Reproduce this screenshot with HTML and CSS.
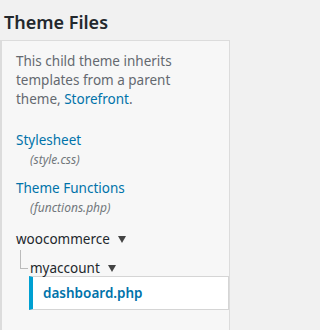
FILE: index.html
```html
<!DOCTYPE html>
<html>
<head>
<meta charset="utf-8">
<link rel="stylesheet" href="styles.css">
</head>
<body>
<h2 class="title">Theme Files</h2>
<div class="panel">
  <p class="note">This child theme inherits<br>templates from a parent<br>theme, <a class="link" href="#">Storefront</a>.</p>
  <ul class="files">
    <li class="file">
      <a class="link file-name" href="#">Stylesheet</a>
      <span class="file-path">(style.css)</span>
    </li>
    <li class="file">
      <a class="link file-name" href="#">Theme Functions</a>
      <span class="file-path">(functions.php)</span>
    </li>
  </ul>
  <div class="tree">
    <div class="folder">woocommerce <svg class="caret" width="8" height="7" viewBox="0 0 8 7"><polygon points="0,0 8,0 4,7" fill="#444"/></svg></div>
    <div class="sub">
      <div class="folder child">myaccount <svg class="caret" width="8" height="7" viewBox="0 0 8 7"><polygon points="0,0 8,0 4,7" fill="#444"/></svg></div>
      <div class="current"><a class="current-link" href="#">dashboard.php</a></div>
    </div>
  </div>
</div>
</body>
</html>
```
FILE: styles.css
```css
html, body {
  margin: 0;
  padding: 0;
  background: #f1f1f1;
  font-family: "Noto Sans", "Open Sans", sans-serif;
  height: 100%;
  overflow: hidden;
}
.title {
  margin: 0;
  padding: 10px 0 0 4px;
  height: 30px;
  font-size: 18px;
  font-weight: 600;
  line-height: 24px;
  color: #23282d;
}
.panel {
  width: 227px;
  min-height: 280px;
  background: #f7f7f7;
  border: 1px solid #dcdcdc;
  border-left: 2px solid #dcdcdc;
  border-bottom: 0;
  padding-top: 11px;
}
.note {
  margin: 0 20px 20.5px 14px;
  font-size: 13.5px;
  line-height: 19px;
  color: #646970;
}
.link {
  color: #0073aa;
  text-decoration: none;
}
.files {
  list-style: none;
  margin: 0;
  padding: 0;
}
.file {
  display: flex;
  flex-direction: column;
  margin: 0 0 10px 14px;
}
.file-name {
  font-size: 13.5px;
  line-height: 20px;
}
.file-path {
  margin: 2px 0 0 14px;
  font-size: 12px;
  line-height: 16px;
  font-style: italic;
  color: #72777c;
}
.tree {
  margin-top: 13.5px;
}
.folder {
  display: flex;
  align-items: center;
  gap: 8px;
  font-size: 13.5px;
  line-height: 20px;
  color: #23282d;
  margin-left: 14px;
}
.sub {
  margin-top: 9px;
  position: relative;
}
.folder.child {
  margin-left: 28px;
  position: relative;
}
.folder.child::before {
  content: "";
  position: absolute;
  left: -10px;
  top: -8px;
  width: 7px;
  height: 18px;
  border-left: 1px solid #bbb;
  border-bottom: 1px solid #bbb;
}
.current {
  margin: -2px 0 0 27px;
  background: #fff;
  border: 1px solid #d5d5d5;
  border-left: 4px solid #00a0d2;
  height: 32px;
  display: flex;
  align-items: center;
  padding-left: 10px;
}
.current-link {
  color: #0073aa;
  font-weight: 600;
  font-size: 13.5px;
  text-decoration: none;
}
```
